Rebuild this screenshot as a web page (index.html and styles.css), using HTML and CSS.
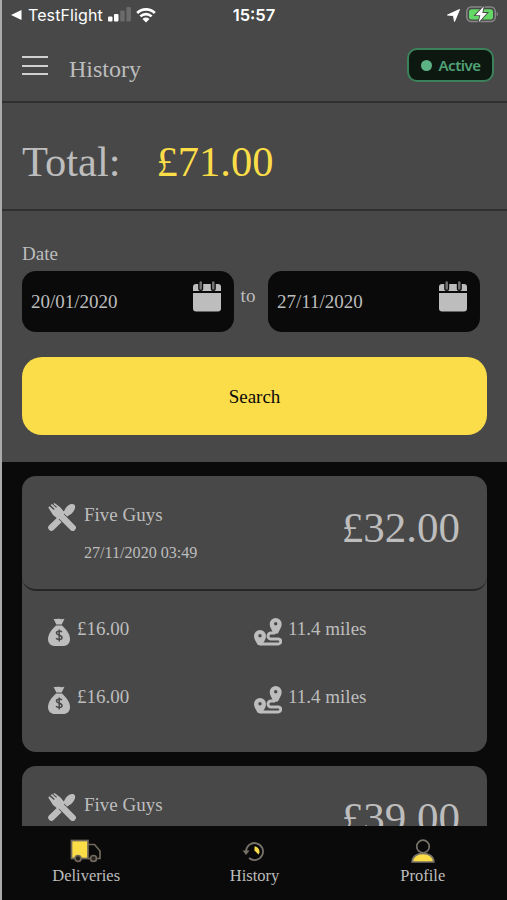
FILE: index.html
```
<!DOCTYPE html>
<html lang="en">
<head>
    <meta charset="UTF-8">
    <meta name="viewport" content="width=device-width, initial-scale=1.0">
    <title>History</title>
    <link rel="stylesheet" href="styles.css">
</head>
<body>
    <!-- Shared icons -->
    <svg class="sprite">
        <symbol id="calendar" viewBox="0 0 28 32">
            <path d="M3 4h22a3 3 0 0 1 3 3v4H0V7a3 3 0 0 1 3-3z"/>
            <path d="M0 13h28v15.500a3 3 0 0 1-3 3H3a3 3 0 0 1-3-3z"/>
            <path d="M7.700 2.500v6M20.300 2.500v6" stroke="#0a0a0a" stroke-width="5" stroke-linecap="round"/>
            <path d="M7.700 2.500v6M20.300 2.500v6" stroke="#727272" stroke-width="2.500" stroke-linecap="round"/>
        </symbol>
        <symbol id="cutlery" viewBox="0 0 28 28">
            <path d="M3.400 24.600L17.500 11" stroke="currentColor" stroke-width="6.400" stroke-linecap="round" fill="none"/>
            <path d="M16 10c0-4.500 4.500-9 8-9 2.800 0 3.500 2 3 4-1 4-5 7.800-8.500 7.800z"/>
            <path d="M9 9L25 25" stroke="#484848" stroke-width="8" fill="none"/>
            <path d="M12 12L24.700 24.700" stroke="currentColor" stroke-width="6.400" stroke-linecap="round" fill="none"/>
            <path d="M.3 4.500L1.500 3.300 5.900 6.900 6.700 6.100 2.700 2.200 4 .9 8.200 4.800 9 4 5.300.9 6.500 0 12.500 4.500 17 10 10.500 16.500 5 12z"/>
        </symbol>
        <symbol id="money" viewBox="0 0 22 28">
            <path d="M5.500.8c2 .6 3.500-.6 5.500 0s3.500.6 5.500 0l-2.800 5.600h-5.400z"/>
            <path d="M8 7.500h6c4 3.500 8 8.500 8 13.500 0 4.500-3 7-7 7H7c-4 0-7-2.500-7-7 0-5 4-10 8-13.500z"/>
            <path d="M13.800 14.200c-1-1.600-5.400-1.500-5.400.9 0 2.600 5.600 1.600 5.600 4.400 0 2.600-4.700 2.600-5.900.7M11.200 11.600v11.800" stroke="#484848" stroke-width="1.500" fill="none"/>
        </symbol>
        <symbol id="route" viewBox="0 0 28 28">
            <path d="M6 26h18.200a2.500 2.500 0 0 0 0-5H17a3 3 0 0 1 0-6h4" stroke="currentColor" stroke-width="2.900" fill="none"/>
            <path fill-rule="evenodd" d="M21.700 0a6 6 0 0 1 6 6c0 3.800-2.300 5.500-3.200 8.500-.6 1.800-5 1.800-5.600 0-.9-3-3.200-4.700-3.200-8.500a6 6 0 0 1 6-6zm0 4a1.700 1.700 0 1 0 0 3.400 1.700 1.700 0 0 0 0-3.400z"/>
            <path fill-rule="evenodd" d="M6 12a6 6 0 0 1 6 6c0 3.500-2.300 5.500-3.200 8-.6 1.800-5 1.800-5.600 0C2.300 23.500 0 21.500 0 18a6 6 0 0 1 6-6zm0 4a1.700 1.700 0 1 0 0 3.400A1.700 1.700 0 0 0 6 16z"/>
        </symbol>
    </svg>

    <div class="app">
        <div class="status-bar">
            <div class="status-left">
                <svg width="11" height="12" viewBox="0 0 11 12"><path d="M0 6L10.500 1v10z" fill="#fff"/></svg>
                <span class="back-app">TestFlight</span>
                <svg class="signal" width="23" height="16" viewBox="0 0 23 16">
                    <rect x="0" y="10.500" width="4.500" height="5" rx="1" fill="#fff"/>
                    <rect x="6" y="8" width="4.500" height="7.500" rx="1" fill="#fff"/>
                    <rect x="12.200" y="4.500" width="4.500" height="11" rx="1" fill="#6b6b6b"/>
                    <rect x="18.400" y="1" width="4.500" height="14.500" rx="1" fill="#6b6b6b"/>
                </svg>
                <svg class="wifi" width="20" height="16" viewBox="0 0 20 16">
                    <path d="M1.200 6a12.500 12.500 0 0 1 17.600 0M4.400 9.400a8 8 0 0 1 11.200 0" fill="none" stroke="#fff" stroke-width="2.700"/>
                    <path d="M6.500 11.900a5 5 0 0 1 7 0L10 15.500z" fill="#fff"/>
                </svg>
            </div>
            <span class="clock">15:57</span>
            <div class="status-right">
                <svg width="13" height="13" viewBox="0 0 13 13"><path d="M.5 6L12.500.5l-5 12-1-6z" fill="#fff" stroke="#fff"/></svg>
                <svg width="33" height="18" viewBox="0 0 33 18">
                    <rect x=".8" y="1" width="28.500" height="14.500" rx="4.500" fill="none" stroke="#878787" stroke-width="1.500"/>
                    <rect x="3" y="3.200" width="24" height="10.200" rx="2.500" fill="#63d866"/>
                    <path d="M30.700 5.700c1.800.8 1.800 4 0 4.800z" fill="#878787"/>
                    <path d="M17.800.2L9.500 9.200h4.800l-1.600 7L21 7h-4.700z" fill="#fff" stroke="#484848" stroke-width="1.800" paint-order="stroke"/>
                </svg>
            </div>
        </div>

        <div class="header">
            <button class="menu" aria-label="Menu"><span></span><span></span><span></span></button>
            <h1>History</h1>
            <div class="active-badge"><i></i>Active</div>
        </div>

        <div class="total">
            <span>Total:</span>
            <span class="total-amount">£71.00</span>
        </div>

        <form class="filter">
            <label>Date</label>
            <div class="dates">
                <div class="date-input">20/01/2020<svg class="calendar"><use href="#calendar"/></svg></div>
                <span class="to">to</span>
                <div class="date-input">27/11/2020<svg class="calendar"><use href="#calendar"/></svg></div>
            </div>
            <button type="button" class="search">Search</button>
        </form>

        <div class="list">
            <div class="card">
                <div class="card-head">
                    <svg class="cutlery"><use href="#cutlery"/></svg>
                    <div class="place">
                        <div class="name">Five Guys</div>
                        <div class="time">27/11/2020 03:49</div>
                    </div>
                    <div class="price">£32.00</div>
                </div>
                <div class="card-body">
                    <div class="row">
                        <div class="cell"><svg class="money"><use href="#money"/></svg>£16.00</div>
                        <div class="cell"><svg class="route"><use href="#route"/></svg>11.4 miles</div>
                    </div>
                    <div class="row">
                        <div class="cell"><svg class="money"><use href="#money"/></svg>£16.00</div>
                        <div class="cell"><svg class="route"><use href="#route"/></svg>11.4 miles</div>
                    </div>
                </div>
            </div>
            <div class="card">
                <div class="card-head">
                    <svg class="cutlery"><use href="#cutlery"/></svg>
                    <div class="place">
                        <div class="name">Five Guys</div>
                    </div>
                    <div class="price">£39.00</div>
                </div>
            </div>
        </div>

        <div class="tabs">
            <div class="tab">
                <svg width="32" height="26" viewBox="0 0 32 26" fill="none" stroke="#70695c" stroke-width="1.700">
                    <rect x="1.500" y="2.500" width="16.500" height="18" fill="#fbdd47"/>
                    <path d="M18 6.500h6.500l5.500 6.500v7.500H18"/>
                    <circle cx="8" cy="20.500" r="3" fill="#282420"/>
                    <circle cx="23.500" cy="20.500" r="3" fill="#282420"/>
                </svg>
                <span>Deliveries</span>
            </div>
            <div class="tab">
                <svg width="24" height="26" viewBox="0 0 24 26" fill="none">
                    <path d="M4 13.500a8.500 8.500 0 1 1 3 6.500" stroke="#77736a" stroke-width="1.800"/>
                    <path d="M.6 12.500h7L4 17z" fill="#77736a"/>
                    <path d="M12.500 8.500c3 0 5 2.500 5 6l-1 2-4-4z" fill="#fbdd47"/>
                </svg>
                <span>History</span>
            </div>
            <div class="tab">
                <svg width="24" height="26" viewBox="0 0 24 26" stroke="#77736a" stroke-width="1.700">
                    <circle cx="12" cy="8.500" r="6.300" fill="none"/>
                    <path d="M1.200 24c0-5 4.500-8.700 10.800-8.700s10.800 3.700 10.800 8.700z" fill="#fbdd47"/>
                </svg>
                <span>Profile</span>
            </div>
        </div>
    </div>
</body>
</html>
```

FILE: styles.css
```
* { box-sizing: border-box; }
body { margin: 0; background: #0a0a0a; color: #bdbdbd; font-family: "Liberation Serif", "Times New Roman", serif; font-size: 19px; line-height: 22px; }
svg { display: block; flex: none; }
button { border: none; font: inherit; cursor: pointer; }
.sprite { display: none; }
.app { height: 900px; display: flex; flex-direction: column; border-left: 2px solid #ababab; overflow: hidden; }

/* Status bar */
.status-bar { height: 30px; flex: none; display: grid; grid-template-columns: 1fr auto 1fr; align-items: center; padding: 0 10px 0 9px; background: #484848; color: #fff; font-family: Inter, "Liberation Sans", sans-serif; font-size: 16px; }
.status-left, .status-right { display: flex; align-items: center; }
.back-app { margin-left: 6px; letter-spacing: 0.1px; }
.signal { margin-left: 5px; margin-bottom: 2px; }
.wifi { margin-left: 5px; }
.clock { font-weight: 600; font-size: 16.5px; }
.status-right { justify-content: flex-end; gap: 6px; margin-right: -2px; }

/* Header */
.header { height: 73px; flex: none; display: flex; align-items: flex-start; padding: 0 13px 0 20px; background: #484848; border-bottom: 2px solid #303030; }
.menu { width: 26px; display: flex; flex-direction: column; gap: 6.5px; padding: 0; margin-top: 26px; background: none; }
.menu span { height: 2px; background: #d0d0d0; }
h1 { margin: 25px 0 0 21px; font-size: 24px; line-height: 28px; font-weight: normal; }
.active-badge { width: 87px; height: 34px; margin: 18px 0 0 auto; display: flex; align-items: center; justify-content: center; gap: 7px; border: 2px solid #3b8159; border-radius: 10px; background: #0d1811; color: #51a276; font: 600 15px "Noto Sans", sans-serif; letter-spacing: -0.5px; }
.active-badge i { width: 11px; height: 11px; border-radius: 50%; background: #5cb383; }

.total { height: 108px; flex: none; display: flex; gap: 36px; align-items: center; padding: 11px 20px 0; background: #484848; border-bottom: 2px solid #303030; font-size: 42.5px; }
.total-amount { color: #fbdd47; }

/* Date filter */
.filter { height: 251px; flex: none; padding: 32px 20px 0; background: #484848; }
.filter label { display: block; }
.dates { display: flex; margin-top: 6px; }
.date-input { width: 212px; height: 61px; display: flex; justify-content: space-between; padding: 0 13px 0 9px; line-height: 61px; background: #0a0a0a; border-radius: 14px; }
.calendar { width: 28px; height: 32px; margin-top: 9px; fill: #bdbdbd; }
.to { width: 34px; padding: 14px 6px 0 0; text-align: center; }
.search { display: block; width: 465px; height: 78px; margin-top: 25px; padding-top: 2px; background: #fbdd4a; border-radius: 20px; color: #0a0a0a; }

/* Deliveries */
.list { flex: 1; min-height: 0; overflow: hidden; padding: 14px 20px 0; background: #0a0a0a; }
.card { width: 465px; height: 276px; margin-bottom: 14px; background: #484848; border-radius: 14px; }
.card-head { height: 115px; display: flex; padding: 27px 27px 0 26px; border-bottom: 2px solid #262626; border-radius: 14px; }
.cutlery { width: 28px; height: 28px; margin-right: 8px; fill: currentColor; }
.place { flex: 1; }
.name { margin-top: 1px; }
.time { margin-top: 16px; font-size: 16.100px; }
.price { padding-top: 1px; font-size: 43px; line-height: 48px; }
.card-body { padding-top: 27px; }
.row { display: grid; grid-template-columns: 206px 1fr; height: 67.500px; padding-left: 26px; }
.cell { display: flex; }
.money { width: 22px; height: 28px; margin-right: 7px; fill: currentColor; }
.route { width: 28px; height: 28px; margin-right: 6px; fill: currentColor; }

/* Bottom tabs */
.tabs { height: 74px; flex: none; display: grid; grid-template-columns: repeat(3, 1fr); padding-top: 12px; background: #0a0a0a; font-size: 16.500px; }
.tab { display: flex; flex-direction: column; align-items: center; }
.tab span { margin-top: 1px; }
```
